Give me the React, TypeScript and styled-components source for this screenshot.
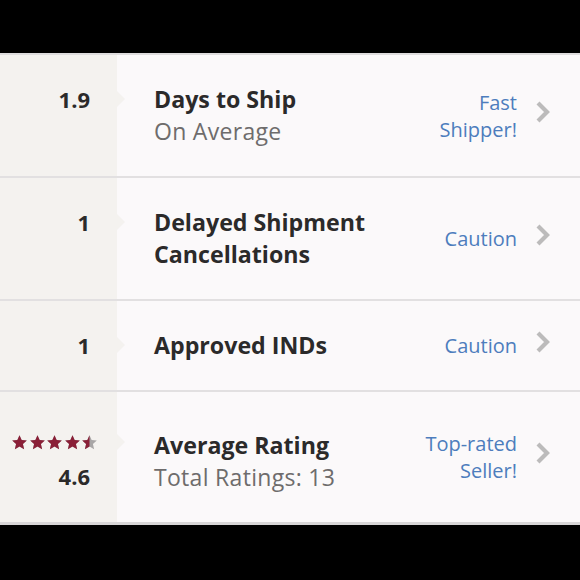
import React from "react";
import styled, { createGlobalStyle } from "styled-components";

const GlobalStyle = createGlobalStyle`
  html, body {
    margin: 0;
    padding: 0;
    background: #000;
  }
  body {
    font-family: "Open Sans", "Lato", sans-serif;
    -webkit-font-smoothing: antialiased;
  }
`;

type Stat = {
  id: string;
  value: string;
  title: string[];
  subtitle?: string;
  status: string[];
  stars?: number;
  padTop?: number;
};

const stats: Stat[] = [
  {
    id: "ship",
    value: "1.9",
    title: ["Days to Ship"],
    subtitle: "On Average",
    status: ["Fast", "Shipper!"],
  },
  {
    id: "delayed",
    value: "1",
    title: ["Delayed Shipment", "Cancellations"],
    status: ["Caution"],
  },
  {
    id: "ind",
    value: "1",
    title: ["Approved INDs"],
    status: ["Caution"],
  },
  {
    id: "rating",
    value: "4.6",
    title: ["Average Rating"],
    subtitle: "Total Ratings: 13",
    status: ["Top-rated", "Seller!"],
    stars: 4.6,
    padTop: 37,
  },
];

const STAR_PATH =
  "M7 0.3l2 4.4 4.8 0.5-3.6 3.2 1.1 4.8L7 10.7 2.7 13.2l1.1-4.8L0.2 5.2l4.8-0.5z";

const Star = ({ fill, idx }: { fill: number; idx: number }) => {
  const clipId = `star-clip-${idx}`;
  return (
    <svg width="15" height="15" viewBox="0 0 14 14">
      <defs>
        <clipPath id={clipId}>
          <rect x="0" y="0" width={14 * fill} height="14" />
        </clipPath>
      </defs>
      <path d={STAR_PATH} fill="#a8a6a6" />
      <path d={STAR_PATH} fill="#8a1f37" clipPath={`url(#${clipId})`} />
    </svg>
  );
};

const Stars = ({ value }: { value: number }) => (
  <StarRow>
    {[0, 1, 2, 3, 4].map((i) => {
      const fill = Math.max(0, Math.min(1, value - i));
      return <Star key={i} idx={i} fill={fill < 1 && fill > 0 ? 0.5 : fill} />;
    })}
  </StarRow>
);

const Chevron = () => (
  <ChevronWrap>
    <svg width="16" height="24" viewBox="0 0 16 24">
      <polyline
        points="3,3 12,12 3,21"
        fill="none"
        stroke="#bcbbbb"
        strokeWidth="4.2"
      />
    </svg>
  </ChevronWrap>
);

const App = () => {
  return (
    <>
      <GlobalStyle />
      <Panel>
        {stats.map((s) => (
          <Row key={s.id}>
            <Side $padTop={s.padTop}>
              {s.stars !== undefined && <Stars value={s.stars} />}
              <Value>{s.value}</Value>
            </Side>
            <Body>
              <Main $padTop={s.padTop}>
                {s.title.map((t) => (
                  <Title key={t}>{t}</Title>
                ))}
                {s.subtitle && <Subtitle>{s.subtitle}</Subtitle>}
              </Main>
              <Status>
                {s.status.map((t) => (
                  <div key={t}>{t}</div>
                ))}
              </Status>
              <Chevron />
            </Body>
          </Row>
        ))}
      </Panel>
    </>
  );
};

const Panel = styled.div`
  margin-top: 53px;
  background: #fbf9fa;
  border-top: 2px solid #dedcdd;
  border-bottom: 3px solid #d8d6d7;
`;

const Row = styled.div`
  display: grid;
  grid-template-columns: 117px 1fr;
  border-bottom: 2px solid #e2e0e1;

  &:last-child {
    border-bottom: none;
  }
`;

const Side = styled.div<{ $padTop?: number }>`
  position: relative;
  background: #f4f2ef;
  display: flex;
  flex-direction: column;
  align-items: flex-end;
  padding: ${(p) => (p.$padTop ? p.$padTop - 1 : 28)}px 27px 0 0;

  &::after {
    content: "";
    position: absolute;
    right: -8px;
    top: ${(p) => (p.$padTop ? p.$padTop + 5 : 36)}px;
    border-top: 8px solid transparent;
    border-bottom: 8px solid transparent;
    border-left: 8px solid #f4f2ef;
  }
`;

const StarRow = styled.div`
  display: flex;
  gap: 2.5px;
  margin-right: -7px;
  margin-bottom: 4px;
  height: 28px;
  align-items: center;
`;

const Value = styled.div`
  font-weight: 700;
  font-size: 22px;
  line-height: 32px;
  color: #2b2a2a;
`;

const Body = styled.div`
  display: flex;
  align-items: center;
  padding: 0 29px 0 37px;
`;

const Main = styled.div<{ $padTop?: number }>`
  flex: 1;
  align-self: stretch;
  white-space: nowrap;
  padding: ${(p) => p.$padTop ?? 28}px 0 29px;
`;

const Title = styled.div`
  font-weight: 700;
  font-size: 23.2px;
  line-height: 32px;
  color: #2b2a2a;
`;

const Subtitle = styled.div`
  font-size: 23px;
  line-height: 32px;
  letter-spacing: 0.3px;
  color: #6e6c6c;
`;

const Status = styled.div`
  text-align: right;
  font-size: 20px;
  line-height: 27px;
  color: #4d7dbd;
`;

const ChevronWrap = styled.div`
  display: flex;
  margin-left: 18px;
  margin-top: -8px;
`;

export default App;
